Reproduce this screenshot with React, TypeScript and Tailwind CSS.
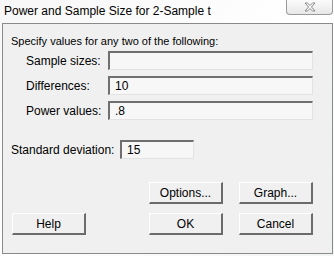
import React from 'react';

const font = { fontFamily: '"Liberation Sans", Arial, sans-serif' };

const Field: React.FC<{ value?: string; className?: string }> = ({ value = '', className = '' }) => (
  <div
    className={`h-[19px] flex items-center pl-[5px] bg-[#f7f7f7] border-t-2 border-l-2 border-b border-r border-t-[#6f6f6f] border-l-[#6f6f6f] border-b-[#e3e3e3] border-r-[#e3e3e3] text-[12px] text-black ${className}`}
  >
    {value}
  </div>
);

const Btn: React.FC<{ label: string; className?: string }> = ({ label, className = '' }) => (
  <div
    className={`w-[74px] h-[22px] flex items-center justify-center bg-[#f0f0f0] border-t border-l border-b-2 border-r-2 border-t-white border-l-white border-b-[#6b6b6b] border-r-[#6b6b6b] text-[12px] text-black ${className}`}
  >
    {label}
  </div>
);

const App: React.FC = () => {
  const rows = [
    { label: 'Sample sizes:', value: '' },
    { label: 'Differences:', value: '10' },
    { label: 'Power values:', value: '.8' },
  ];

  return (
    <div className="w-[334px] h-[256px] overflow-hidden bg-gradient-to-br from-[#f7f7f7] via-[#ffffff] to-[#f2f5f5]" style={font}>
      {/* Title bar */}
      <div className="h-[23px] flex items-start">
        <div className="pl-[4px] pt-[2px] text-[12px] text-black whitespace-nowrap">
          Power and Sample Size for 2-Sample t
        </div>
        <div className="ml-auto mr-[1px] w-[47px] h-[15px] rounded-b-[4px] border border-t-0 border-[#9a9a9a] bg-gradient-to-b from-[#fbfbfb] to-[#e8e8e8] flex items-center justify-center">
          <svg width="12" height="10" viewBox="0 0 12 10">
            <path d="M1 1 L3.5 1 L6 3.5 L8.5 1 L11 1 L7.5 5 L11 9 L8.5 9 L6 6.5 L3.5 9 L1 9 L4.5 5 Z" fill="#fafafa" stroke="#8a8a8a" strokeWidth="1" />
          </svg>
        </div>
      </div>

      {/* Client area */}
      <div className="ml-[2px] w-[331px] h-[231px] border border-[#8a8a8a] bg-[#f0f0f0] text-[12px] text-black whitespace-nowrap">
        <div className="pl-[8px] pt-[10px] leading-[14px] text-[11px]">Specify values for any two of the following:</div>

        <div className="mt-[3px] flex flex-col gap-[6px]">
          {rows.map((r) => (
            <div key={r.label} className="flex items-center">
              <div className="w-[105px] pl-[23px]">{r.label}</div>
              <Field value={r.value} className="w-[205px]" />
            </div>
          ))}
        </div>

        <div className="mt-[20px] flex items-center">
          <div className="w-[117px] pl-[8px]">Standard deviation:</div>
          <Field value="15" className="w-[74px]" />
        </div>

        <div className="mt-[23px] flex gap-[16px] pl-[146px]">
          <Btn label="Options..." />
          <Btn label="Graph..." />
        </div>
        <div className="mt-[9px] flex">
          <Btn label="Help" className="ml-[9px]" />
          <Btn label="OK" className="ml-[63px]" />
          <Btn label="Cancel" className="ml-[16px]" />
        </div>
      </div>
    </div>
  );
};

export default App;
